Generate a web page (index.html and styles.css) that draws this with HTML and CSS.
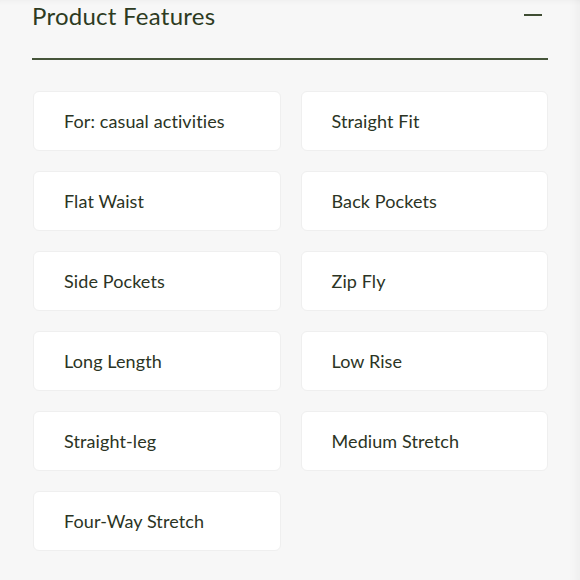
FILE: index.html
```html
<!DOCTYPE html>
<html lang="en">
<head>
<meta charset="utf-8">
<title>Product Features</title>
<link rel="stylesheet" href="styles.css">
</head>
<body>
<section class="panel">
  <header class="panel-head">
    <h2 class="panel-title">Product Features</h2>
    <span class="collapse-icon" aria-hidden="true"></span>
  </header>
  <ul class="features">
    <li class="feature">For: casual activities</li>
    <li class="feature">Straight Fit</li>
    <li class="feature">Flat Waist</li>
    <li class="feature">Back Pockets</li>
    <li class="feature">Side Pockets</li>
    <li class="feature">Zip Fly</li>
    <li class="feature">Long Length</li>
    <li class="feature">Low Rise</li>
    <li class="feature">Straight-leg</li>
    <li class="feature">Medium Stretch</li>
    <li class="feature">Four-Way Stretch</li>
  </ul>
</section>
</body>
</html>
```

FILE: styles.css
```css
html, body {
  margin: 0;
  padding: 0;
  background: #f7f7f7;
}
body {
  font-family: "Lato", "Liberation Sans", sans-serif;
  color: #2b3424;
  width: 580px;
  height: 580px;
  overflow: hidden;
  box-shadow: inset 0 6px 6px -6px rgba(0,0,0,0.06), inset -14px 0 12px -12px rgba(0,0,0,0.05);
}
.panel {
  padding: 0 32px 0 32px;
}
.panel-head {
  display: flex;
  align-items: center;
  justify-content: space-between;
  height: 58px;
  border-bottom: 2px solid #46553a;
  box-sizing: content-box;
}
.panel-title {
  margin: 0;
  font-size: 24px;
  font-weight: 400;
  color: #2d3b22;
  align-self: flex-start;
  line-height: 30px;
  margin-top: 1px;
  letter-spacing: 0.25px;
}
.collapse-icon {
  display: block;
  width: 18px;
  height: 2px;
  background: #3f4d33;
  margin-right: 6px;
  align-self: flex-start;
  margin-top: 14px;
}
.features {
  list-style: none;
  margin: 31px 0 0 1px;
  padding: 0;
  display: grid;
  grid-template-columns: 1fr 1fr;
  column-gap: 20px;
  row-gap: 20px;
}
.feature {
  height: 60px;
  box-sizing: border-box;
  display: flex;
  align-items: center;
  padding-left: 30px;
  background: #ffffff;
  border: 1px solid #efefef;
  border-radius: 6px;
  font-size: 18px;
  letter-spacing: 0.1px;
  color: #2b3424;
}
```
